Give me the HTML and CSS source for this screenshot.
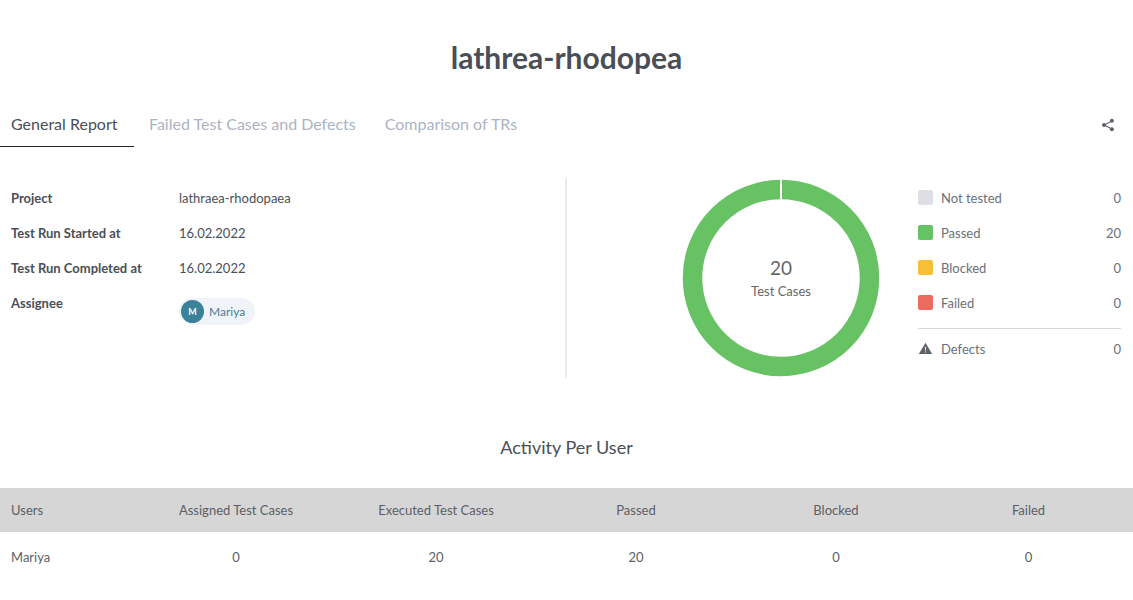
FILE: index.html
```html
<!DOCTYPE html>
<html>
	<head>
		<meta charset="utf-8">
		<title>lathrea-rhodopea</title>
		<link rel="stylesheet" href="styles.css">
	</head>
	<body>
		<h1 class="title">lathrea-rhodopea</h1>

		<div class="tabs">
			<a class="tab tab-active">General Report</a>
			<a class="tab">Failed Test Cases and Defects</a>
			<a class="tab">Comparison of TRs</a>
			<svg class="share" width="14" height="14" viewBox="0 0 14 14">
				<path d="M10.8 2.9 3.2 7l7.6 4.1" fill="none" stroke="#5f6368" stroke-width="1.1"/>
				<circle cx="10.9" cy="2.8" r="2" fill="#5f6368"/>
				<circle cx="3" cy="7" r="2" fill="#5f6368"/>
				<circle cx="10.9" cy="11.2" r="2" fill="#5f6368"/>
			</svg>
		</div>

		<div class="summary">
			<div class="details">
				<div class="row"><span class="label">Project</span><span>lathraea-rhodopaea</span></div>
				<div class="row"><span class="label">Test Run Started at</span><span>16.02.2022</span></div>
				<div class="row"><span class="label">Test Run Completed at</span><span>16.02.2022</span></div>
				<div class="row">
					<span class="label">Assignee</span>
					<span class="chip"><span class="avatar">M</span>Mariya</span>
				</div>
			</div>

			<div class="chart">
				<svg width="198" height="198" viewBox="0 0 198 198">
					<circle cx="99" cy="99" r="88.5" fill="none" stroke="#66c263" stroke-width="19.5"/>
					<rect x="98" y="0" width="2" height="20" fill="#fff"/>
				</svg>
				<div class="chart-center">
					<div class="chart-num">20</div>
					<div class="chart-text">Test Cases</div>
				</div>
			</div>

			<div class="legend">
				<div class="legend-row"><i class="swatch grey"></i><span class="legend-name">Not tested</span><span>0</span></div>
				<div class="legend-row"><i class="swatch green"></i><span class="legend-name">Passed</span><span>20</span></div>
				<div class="legend-row"><i class="swatch yellow"></i><span class="legend-name">Blocked</span><span>0</span></div>
				<div class="legend-row"><i class="swatch red"></i><span class="legend-name">Failed</span><span>0</span></div>
				<div class="legend-row defects">
					<svg class="swatch" width="15" height="15" viewBox="0 0 15 15"><path d="M7.5 1.8 14.2 13H.8z" fill="#5f6368"/><path d="M7 5.8h1v3.8H7zM7 10.5h1v1.1H7z" fill="#fff"/></svg>
					<span class="legend-name">Defects</span><span>0</span>
				</div>
			</div>
		</div>

		<h2 class="subtitle">Activity Per User</h2>

		<div class="table">
			<div class="tr th">
				<span class="first">Users</span><span>Assigned Test Cases</span><span>Executed Test Cases</span><span>Passed</span><span>Blocked</span><span>Failed</span>
			</div>
			<div class="tr">
				<span class="first">Mariya</span><span>0</span><span>20</span><span>20</span><span>0</span><span>0</span>
			</div>
		</div>
	</body>
</html>
```

FILE: styles.css
```css
body { margin: 0; overflow: hidden; font-family: Lato, sans-serif; color: #4a4f57; background: #fff; }

.title { margin: 0; padding-top: 39px; height: 36px; line-height: 36px; font-size: 30px; font-weight: 700; text-align: center; color: #4a4f57; }

/* tabs */
.tabs { display: flex; align-items: center; height: 43px; margin-top: 29px; }
.tab { display: block; height: 43px; line-height: 39px; padding: 0 14px 0 11px; font-size: 16px; color: #adb3c2; margin-right: 4px; box-sizing: border-box; }
.tab-active { color: #4a4f57; border-bottom: 1px solid #22262b; width: 134px; }
.share { margin-left: auto; margin-right: 18px; margin-bottom: 2px; }

/* top part */
.summary { display: flex; margin-top: 31px; height: 200px; }
.details { width: 565px; border-right: 2px solid #ececec; padding-top: 3px; height: 197px; font-size: 13px; }
.row { display: flex; height: 35px; line-height: 35px; }
.label { width: 168px; padding-left: 11px; font-weight: 700; color: #4a4f57; }
.chip { display: flex; align-items: center; height: 27px; margin-top: 12px; padding: 0 10px 0 2px; border-radius: 14px; background: #f0f4f8; font-size: 12px; color: #4d7a94; line-height: 27px; }
.avatar { width: 23px; height: 23px; border-radius: 50%; background: #3a8199; color: #fff; font-size: 9px; font-weight: 700; text-align: center; line-height: 23px; margin-right: 5px; }

.chart { position: relative; width: 198px; height: 198px; margin-top: 1px; margin-left: 115px; }
.chart-center { position: absolute; top: 78px; left: 0; width: 198px; text-align: center; color: #666; }
.chart-num { font-size: 19px; line-height: 22px; }
.chart-text { font-size: 13px; line-height: 25px; }

.legend { width: 203px; margin-left: 38px; font-size: 13px; color: #6b6f78; padding-top: 2px; }
.legend-row { display: flex; align-items: center; height: 35px; }
.legend-name { flex: 1; }
.swatch { display: block; width: 15px; height: 15px; border-radius: 2px; margin-right: 8px; }
.grey { background: #dddfe4; }
.green { background: #66c263; }
.yellow { background: #f6bf38; }
.red { background: #ec6a5e; }
.defects { border-top: 1px solid #d8d8d8; margin-top: 8px; height: 39px; }

/* table */
.subtitle { margin: 57px 0 0; height: 24px; line-height: 24px; font-size: 18px; font-weight: 400; text-align: center; color: #4a4f57; }
.table { margin-top: 29px; font-size: 13px; color: #5c5f66; }
.tr { display: grid; grid-template-columns: 136px 200px 200px 200px 200px 185px; height: 50px; line-height: 50px; text-align: center; }
.th { height: 44px; line-height: 44px; background: #d6d6d6; }
.first { text-align: left; padding-left: 11px; }
```
